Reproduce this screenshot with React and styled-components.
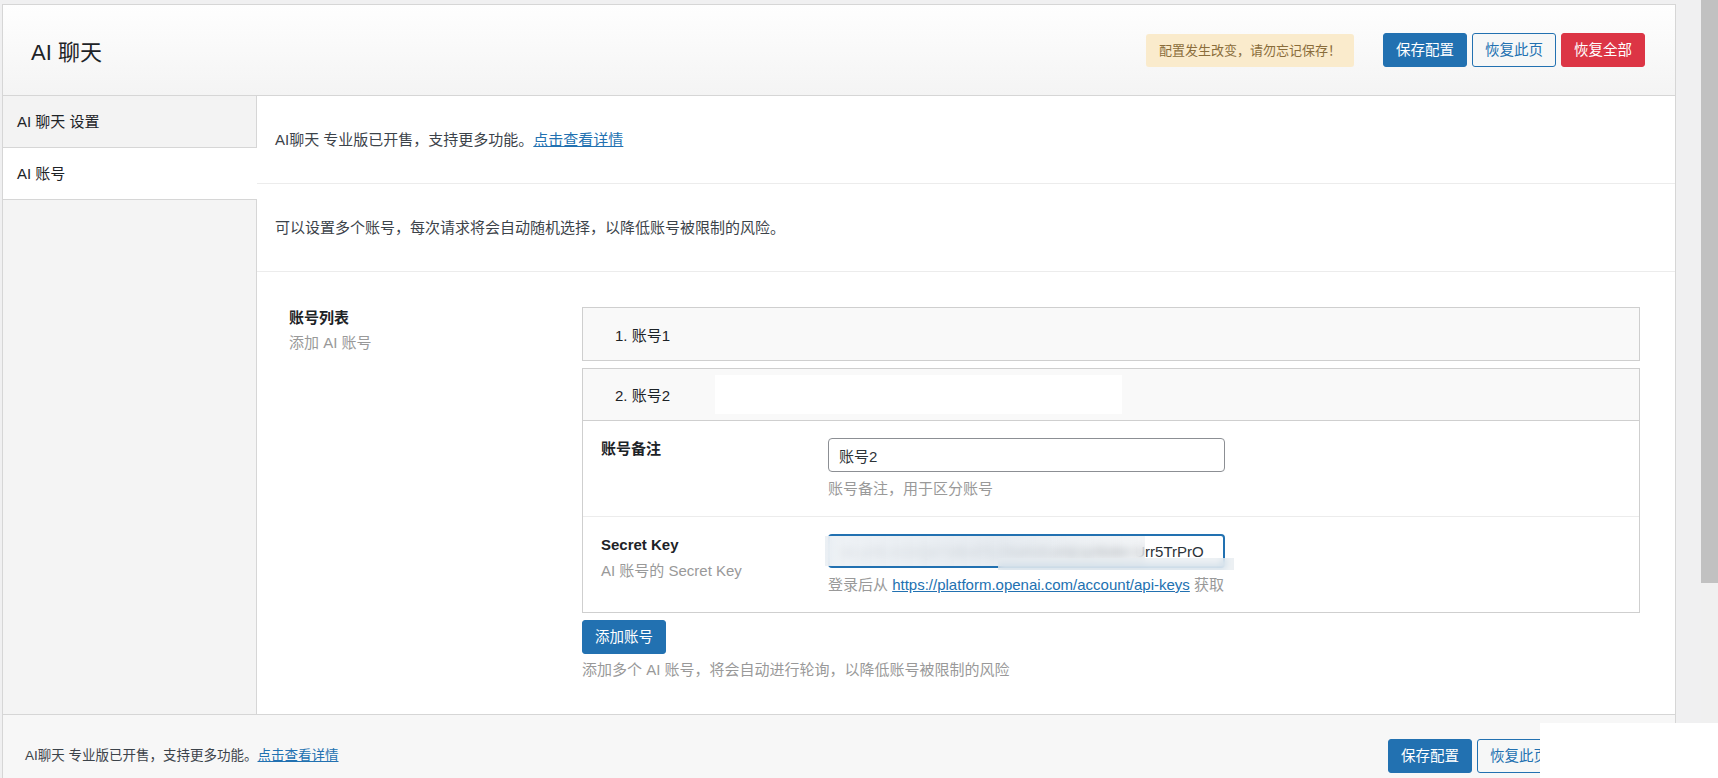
import React from "react";
import styled, { createGlobalStyle, css } from "styled-components";

const GlobalStyle = createGlobalStyle`
  html, body {
    margin: 0;
    padding: 0;
    height: 100%;
    overflow: hidden;
  }
  body {
    background: #f0f0f1;
    font-family: "Liberation Sans", "Noto Sans CJK SC", sans-serif;
    color: #3c434a;
  }
  * {
    box-sizing: border-box;
  }
`;

const Page = styled.div`
  display: flex;
  height: 100vh;
  overflow: hidden;
`;

const Main = styled.div`
  flex: 1;
  min-width: 0;
  padding: 4px 25px 0 2px;
`;

/* fake window scrollbar on the right */
const ScrollRail = styled.div`
  width: 17px;
  flex-shrink: 0;
  background: #f0f0f0;
`;

const ScrollThumb = styled.div`
  height: 583px;
  background: #c1c1c1;
`;

const Panel = styled.div`
  border: 1px solid #d6d6d6;
  background: #fff;
`;

const Header = styled.header`
  height: 91px;
  display: flex;
  align-items: center;
  padding: 0 30px 0 28px;
  background: linear-gradient(#fefefe, #f4f4f4);
  border-bottom: 1px solid #d6d6d6;
`;

const Title = styled.h1`
  flex: 1;
  margin: 0;
  font-size: 22px;
  font-weight: 400;
  color: #1d2327;
`;

const Notice = styled.div`
  height: 33px;
  line-height: 33px;
  padding: 0 13px;
  margin-right: 29px;
  border-radius: 3px;
  background: #faebcc;
  color: #8a6d3b;
  font-size: 13px;
`;

const ButtonGroup = styled.div`
  display: flex;
  gap: 5px;
`;

const variants = {
  primary: css`
    background: #2271b1;
    border-color: #2271b1;
    color: #fff;
  `,
  outline: css`
    background: #f6f7f7;
    border-color: #2271b1;
    color: #2271b1;
  `,
  danger: css`
    background: #dc3545;
    border-color: #dc3545;
    color: #fff;
  `,
};

const Button = styled.button`
  height: 34px;
  padding: 0 12px;
  border: 1px solid;
  border-radius: 3px;
  font-family: inherit;
  font-size: 14.5px;
  line-height: 32px;
  cursor: pointer;
  ${({ $variant }) => variants[$variant || "primary"]}
`;

const Body = styled.div`
  display: flex;
`;

const Sidebar = styled.nav`
  width: 254px;
  flex-shrink: 0;
  background: #f4f4f4;
  border-right: 1px solid #d6d6d6;
`;

const Tab = styled.div`
  height: 52px;
  line-height: 51px;
  padding-left: 14px;
  font-size: 15px;
  color: #1d2327;
  border-bottom: 1px solid #d6d6d6;
  background: ${({ $active }) => ($active ? "#fff" : "#f3f3f3")};
  margin-right: ${({ $active }) => ($active ? "-1px" : "0")};
`;

const Content = styled.div`
  flex: 1;
  min-width: 0;
`;

const Intro = styled.div`
  padding: 33px 18px;
  border-bottom: 1px solid #ececec;
  font-size: 15px;
  line-height: 21px;
`;

const Link = styled.a`
  color: #2271b1;
  text-decoration: underline;
`;

const FieldSection = styled.div`
  display: flex;
  padding: 35px 35px 33px 32px;
`;

const FieldLabel = styled.div`
  width: 293px;
  flex-shrink: 0;
`;

const LabelText = styled.div`
  font-size: 15px;
  line-height: 22px;
  font-weight: 600;
  color: #1d2327;
`;

const Hint = styled.div`
  font-size: 15px;
  line-height: 22px;
  color: #999;
  margin-top: ${({ $gap }) => $gap || 3}px;
`;

const FieldBody = styled.div`
  flex: 1;
  min-width: 0;
`;

const AccordionItem = styled.div`
  border: 1px solid #cfcfcf;
  margin-bottom: ${({ $last }) => ($last ? 0 : 7)}px;
  background: #fff;
`;

const ItemHead = styled.div`
  height: 52px;
  display: flex;
  align-items: center;
  padding-left: 32px;
  background: #f9f9f9;
  font-size: 15px;
  color: #1d2327;
  border-bottom: ${({ $open }) => ($open ? "1px solid #cfcfcf" : "none")};
`;

const HeadMask = styled.span`
  width: 407px;
  height: 39px;
  margin-left: 45px;
  background: #fff;
`;

const Row = styled.div`
  display: flex;
  padding: 17px 18px 16px;
  border-bottom: 1px solid #ececec;

  &:last-child {
    border-bottom: none;
  }
`;

const RowLabel = styled.div`
  width: 227px;
  flex-shrink: 0;
`;

const RowField = styled.div`
  flex: 1;
  min-width: 0;
`;

const InputWrap = styled.div`
  position: relative;
  width: 397px;
`;

const TextInput = styled.input`
  display: block;
  width: 397px;
  height: 34px;
  padding: 0 10px;
  border: ${({ $focused }) => ($focused ? "2px solid #2271b1" : "1px solid #8c8f94")};
  border-radius: 4px;
  font-family: inherit;
  font-size: 15px;
  color: #2c3338;
  background: #fff;
  outline: none;
`;

const KeyBlur = styled.div`
  position: absolute;
  left: -3px;
  top: 2px;
  width: 320px;
  height: 30px;
  backdrop-filter: blur(4px);
  background: linear-gradient(
    90deg,
    rgba(236, 240, 244, 0.9),
    rgba(226, 232, 238, 0.85) 55%,
    rgba(232, 236, 240, 0.55)
  );
`;

const KeyBlurTail = styled.div`
  position: absolute;
  left: 170px;
  top: 24px;
  width: 236px;
  height: 12px;
  backdrop-filter: blur(3px);
  background: rgba(228, 233, 238, 0.7);
`;

const AddButton = styled(Button)`
  margin-top: 7px;
`;

const Footer = styled.footer`
  display: flex;
  align-items: center;
  justify-content: space-between;
  padding: 24px 25px 30px 22px;
  border-top: 1px solid #d6d6d6;
  background: #f7f7f7;
  font-size: 13.5px;
  line-height: 20px;
`;

/* white patch over the bottom-right corner */
const CornerPatch = styled.div`
  position: fixed;
  left: 1540px;
  top: 723px;
  right: 0;
  bottom: 0;
  background: #fff;
`;

const PromoText = () => (
  <>
    AI聊天 专业版已开售，支持更多功能。<Link href="#">点击查看详情</Link>
  </>
);

export default function App() {
  return (
    <>
      <GlobalStyle />
      <Page>
        <Main>
          <Panel>
            <Header>
              <Title>AI 聊天</Title>
              <Notice>配置发生改变，请勿忘记保存！</Notice>
              <ButtonGroup>
                <Button $variant="primary">保存配置</Button>
                <Button $variant="outline">恢复此页</Button>
                <Button $variant="danger">恢复全部</Button>
              </ButtonGroup>
            </Header>

            <Body>
              <Sidebar>
                <Tab>AI 聊天 设置</Tab>
                <Tab $active>AI 账号</Tab>
              </Sidebar>

              <Content>
                <Intro>
                  <PromoText />
                </Intro>
                <Intro>可以设置多个账号，每次请求将会自动随机选择，以降低账号被限制的风险。</Intro>

                <FieldSection>
                  <FieldLabel>
                    <LabelText>账号列表</LabelText>
                    <Hint>添加 AI 账号</Hint>
                  </FieldLabel>
                  <FieldBody>
                    <AccordionItem>
                      <ItemHead>1. 账号1</ItemHead>
                    </AccordionItem>
                    <AccordionItem $last>
                      <ItemHead $open>
                        2. 账号2
                        <HeadMask />
                      </ItemHead>
                      <Row>
                        <RowLabel>
                          <LabelText>账号备注</LabelText>
                        </RowLabel>
                        <RowField>
                          <TextInput defaultValue="账号2" />
                          <Hint $gap={6}>账号备注，用于区分账号</Hint>
                        </RowField>
                      </Row>
                      <Row>
                        <RowLabel>
                          <LabelText>Secret Key</LabelText>
                          <Hint $gap={4}>AI 账号的 Secret Key</Hint>
                        </RowLabel>
                        <RowField>
                          <InputWrap>
                            <TextInput $focused defaultValue="sk-pr9Lm2xQe7vBn4TcZ8wKd1oHjUyXk4m Urr5TrPrO" />
                            <KeyBlur />
                            <KeyBlurTail />
                          </InputWrap>
                          <Hint $gap={6}>
                            登录后从 <Link href="#">https://platform.openai.com/account/api-keys</Link> 获取
                          </Hint>
                        </RowField>
                      </Row>
                    </AccordionItem>
                    <AddButton $variant="primary">添加账号</AddButton>
                    <Hint $gap={5}>添加多个 AI 账号，将会自动进行轮询，以降低账号被限制的风险</Hint>
                  </FieldBody>
                </FieldSection>
              </Content>
            </Body>

            <Footer>
              <div>
                <PromoText />
              </div>
              <ButtonGroup>
                <Button $variant="primary">保存配置</Button>
                <Button $variant="outline">恢复此页</Button>
                <Button $variant="danger">恢复全部</Button>
              </ButtonGroup>
            </Footer>
          </Panel>
        </Main>
        <ScrollRail>
          <ScrollThumb />
        </ScrollRail>
      </Page>
      <CornerPatch />
    </>
  );
}
